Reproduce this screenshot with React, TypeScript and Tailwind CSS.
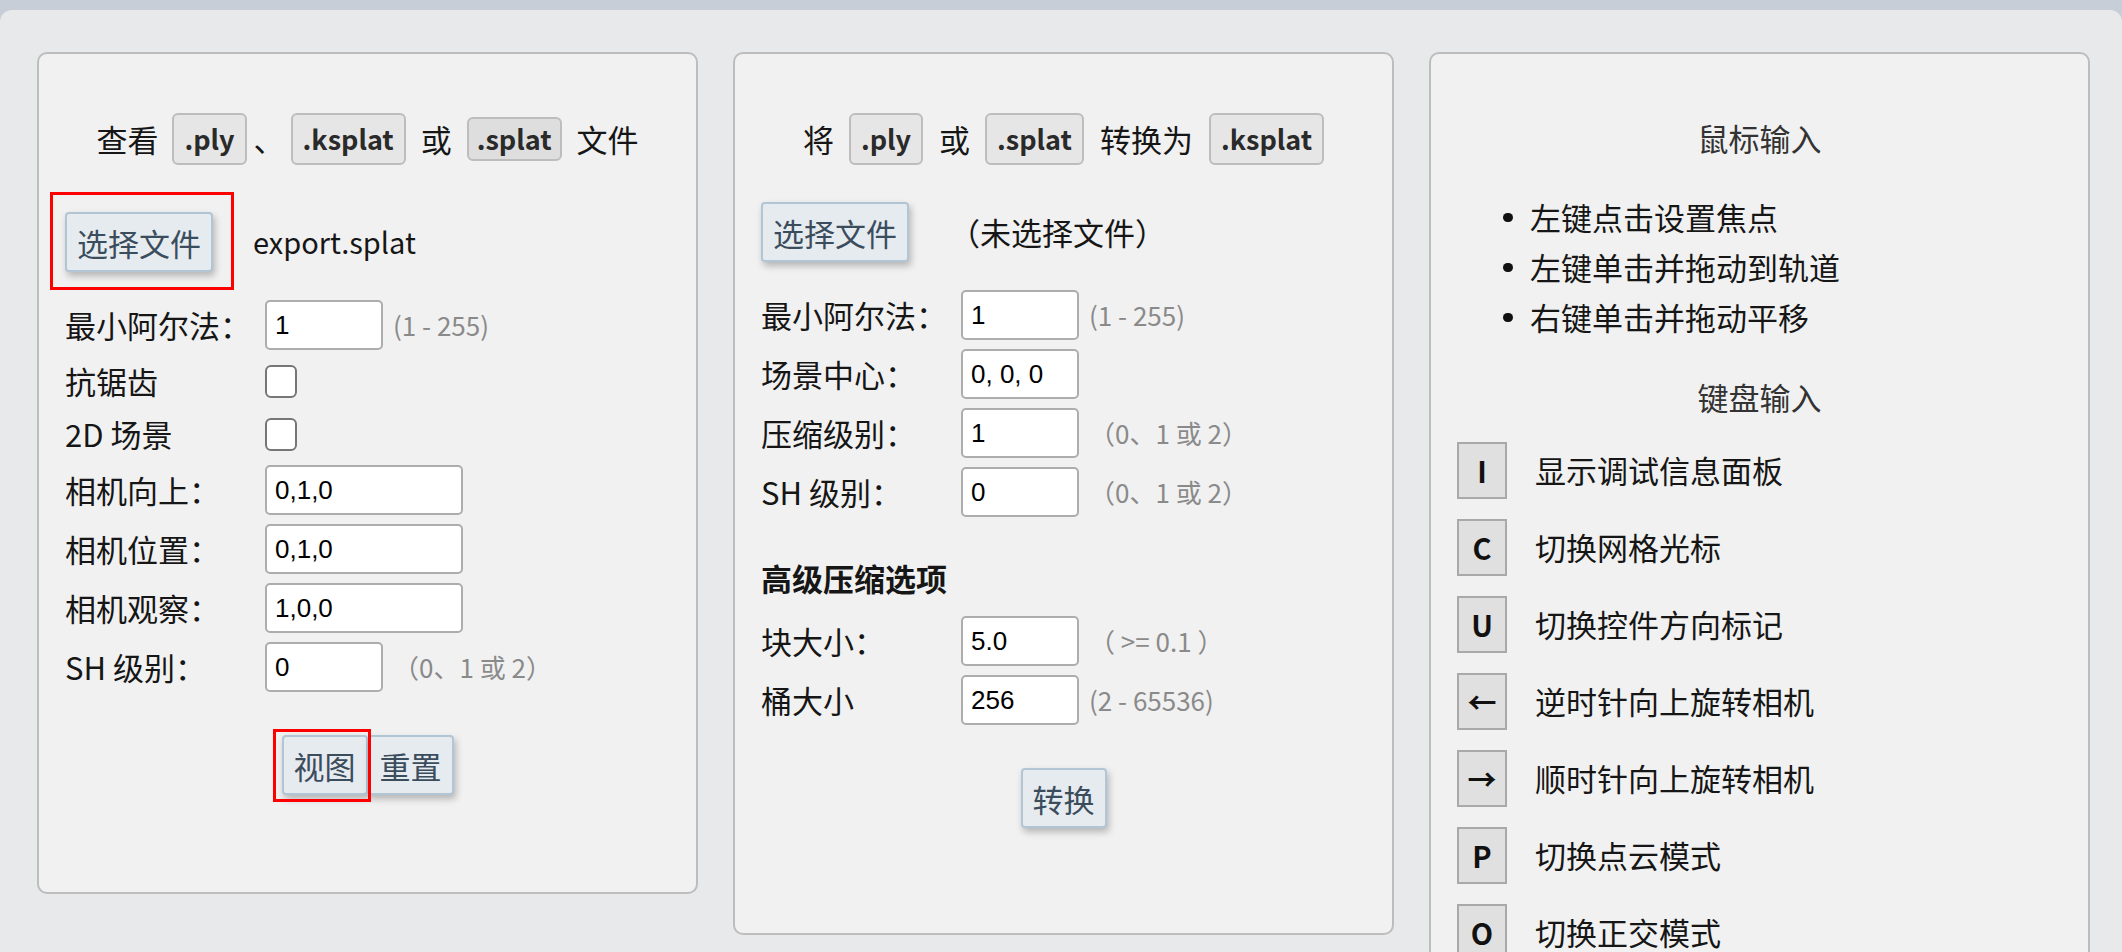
import type { ReactNode } from "react";
import clsx from "clsx";

function Ext({ children, small, className }: { children: ReactNode; small?: boolean; className?: string }) {
  return (
    <span
      className={clsx(
        "inline-flex items-center rounded-[6px] border-2 border-[#bdbdbd] text-[27px] font-bold text-[#2a2a2a]",
        small ? "h-[44px] bg-[#dedede] px-[8px]" : "h-[52px] bg-[#e6e6e6] px-[10px]",
        className
      )}
    >
      {children}
    </span>
  );
}

function Btn({ children, marked, markClass }: { children: ReactNode; marked?: boolean; markClass?: string }) {
  return (
    <div className="relative">
      <button className="h-[60px] rounded-[4px] border-2 border-[#b2c5d5] bg-[#e6ebf0] px-[10px] text-[31px] leading-none text-[#3b4d5d] shadow-[2px_4px_7px_rgba(0,0,0,0.25)]">
        {children}
      </button>
      {marked && <span className={clsx("pointer-events-none absolute z-10 border-[3px] border-[#ff0000]", markClass)} />}
    </div>
  );
}

function Field({ label, value, wide, hint }: { label: string; value: string; wide?: boolean; hint?: string }) {
  return (
    <div className="flex h-[50px] items-center">
      <div className="w-[200px] shrink-0">{label}</div>
      <input
        readOnly
        value={value}
        className={clsx(
          "h-[50px] rounded-[5px] border-2 border-[#adadad] bg-white px-[8px] font-[Liberation_Sans,Arial,sans-serif] text-[26px] text-black outline-none",
          wide ? "w-[198px]" : "w-[118px]"
        )}
      />
      {hint && <span className="ml-[10px] whitespace-pre text-[26px] leading-[34px] text-[#8a8a8a]">{hint}</span>}
    </div>
  );
}

function Check({ label }: { label: string }) {
  return (
    <div className="flex h-[44px] items-center">
      <div className="w-[200px] shrink-0">{label}</div>
      <input type="checkbox" className="h-[33px] w-[32px] appearance-none rounded-[6px] border-2 border-[#767676] bg-white" />
    </div>
  );
}

function Panel({ children, className }: { children: ReactNode; className?: string }) {
  return (
    <div className={clsx("w-[661px] shrink-0 rounded-[10px] border-2 border-[#bdbdbd] bg-[#f1f1f1] px-[26px]", className)}>
      {children}
    </div>
  );
}

const keys = [
  ["I", "显示调试信息面板"],
  ["C", "切换网格光标"],
  ["U", "切换控件方向标记"],
  ["←", "逆时针向上旋转相机"],
  ["→", "顺时针向上旋转相机"],
  ["P", "切换点云模式"],
  ["O", "切换正交模式"],
];

export default function App() {
  return (
    <div className="h-[952px] w-[2122px] overflow-hidden bg-[#c8ced8] font-[Noto_Sans_CJK_SC,sans-serif] text-[31px] text-[#161616]">
      <div className="h-[10px]" />
      <div className="flex h-[942px] items-start gap-[35px] rounded-t-[12px] bg-[#e8e9eb] pl-[37px] pt-[42px]">
        {/* viewer */}
        <Panel className="pt-[59px] pb-[97px]">
          <div className="flex h-[52px] items-center justify-center">
            <span>查看</span>
            <Ext className="ml-[14px]">.ply</Ext>
            <span className="ml-[7px]">、</span>
            <Ext className="ml-[6px]">.ksplat</Ext>
            <span className="ml-[15px]">或</span>
            <Ext small className="ml-[15px]">.splat</Ext>
            <span className="ml-[15px]">文件</span>
          </div>
          <div className="mt-[47px] flex items-center">
            <Btn marked markClass="-left-[15px] -right-[21px] -top-[20px] -bottom-[18px]">选择文件</Btn>
            <span className="ml-[40px] text-[29px]">export.splat</span>
          </div>
          <div className="mt-[28px] flex flex-col gap-[9px]">
            <Field label="最小阿尔法：" value="1" hint="(1 - 255)" />
            <Check label="抗锯齿" />
            <Check label="2D 场景" />
            <Field label="相机向上：" value="0,1,0" wide />
            <Field label="相机位置：" value="0,1,0" wide />
            <Field label="相机观察：" value="1,0,0" wide />
            <Field label="SH 级别：" value="0" hint="（0、1 或 2）" />
          </div>
          <div className="mt-[43px] flex justify-center">
            <Btn marked markClass="-left-[9px] -right-[3px] -top-[6px] -bottom-[7px]">视图</Btn>
            <Btn>重置</Btn>
          </div>
        </Panel>

        {/* converter */}
        <Panel className="pt-[59px] pb-[105px]">
          <div className="flex h-[52px] items-center justify-center">
            <span>将</span>
            <Ext className="ml-[15px]">.ply</Ext>
            <span className="ml-[16px]">或</span>
            <Ext className="ml-[15px]">.splat</Ext>
            <span className="ml-[16px]">转换为</span>
            <Ext className="ml-[16px]">.ksplat</Ext>
          </div>
          <div className="mt-[37px] flex items-center">
            <Btn>选择文件</Btn>
            <span className="ml-[40px]">（未选择文件）</span>
          </div>
          <div className="mt-[28px] flex flex-col gap-[9px]">
            <Field label="最小阿尔法：" value="1" hint="(1 - 255)" />
            <Field label="场景中心：" value="0, 0, 0" />
            <Field label="压缩级别：" value="1" hint="（0、1 或 2）" />
            <Field label="SH 级别：" value="0" hint="（0、1 或 2）" />
          </div>
          <div className="mt-[41px] flex h-[40px] items-center font-semibold">高级压缩选项</div>
          <div className="mt-[18px] flex flex-col gap-[9px]">
            <Field label="块大小：" value="5.0" hint="（ >= 0.1 ）" />
            <Field label="桶大小" value="256" hint="(2 - 65536)" />
          </div>
          <div className="mt-[43px] flex justify-center">
            <Btn>转换</Btn>
          </div>
        </Panel>

        {/* controls help */}
        <Panel className="pt-[64px] pb-[60px]">
          <div className="flex h-[40px] items-center justify-center text-[#333]">鼠标输入</div>
          <ul className="mt-[34px]">
            {["左键点击设置焦点", "左键单击并拖动到轨道", "右键单击并拖动平移"].map((t) => (
              <li key={t} className="flex h-[50px] items-center">
                <span className="ml-[46px] h-[9px] w-[10px] rounded-full bg-[#111]" />
                <span className="ml-[17px]">{t}</span>
              </li>
            ))}
          </ul>
          <div className="mt-[35px] flex h-[40px] items-center justify-center text-[#333]">键盘输入</div>
          <div className="mt-[25px] flex flex-col gap-[20px]">
            {keys.map(([k, d]) => (
              <div key={k} className="flex h-[57px] items-center">
                <span className="flex h-[57px] w-[50px] shrink-0 items-center justify-center border-2 border-[#a9a9a9] bg-[#e0e0e0] text-[29px] font-bold text-[#111]">
                  {k}
                </span>
                <span className="ml-[28px]">{d}</span>
              </div>
            ))}
          </div>
        </Panel>
      </div>
    </div>
  );
}
